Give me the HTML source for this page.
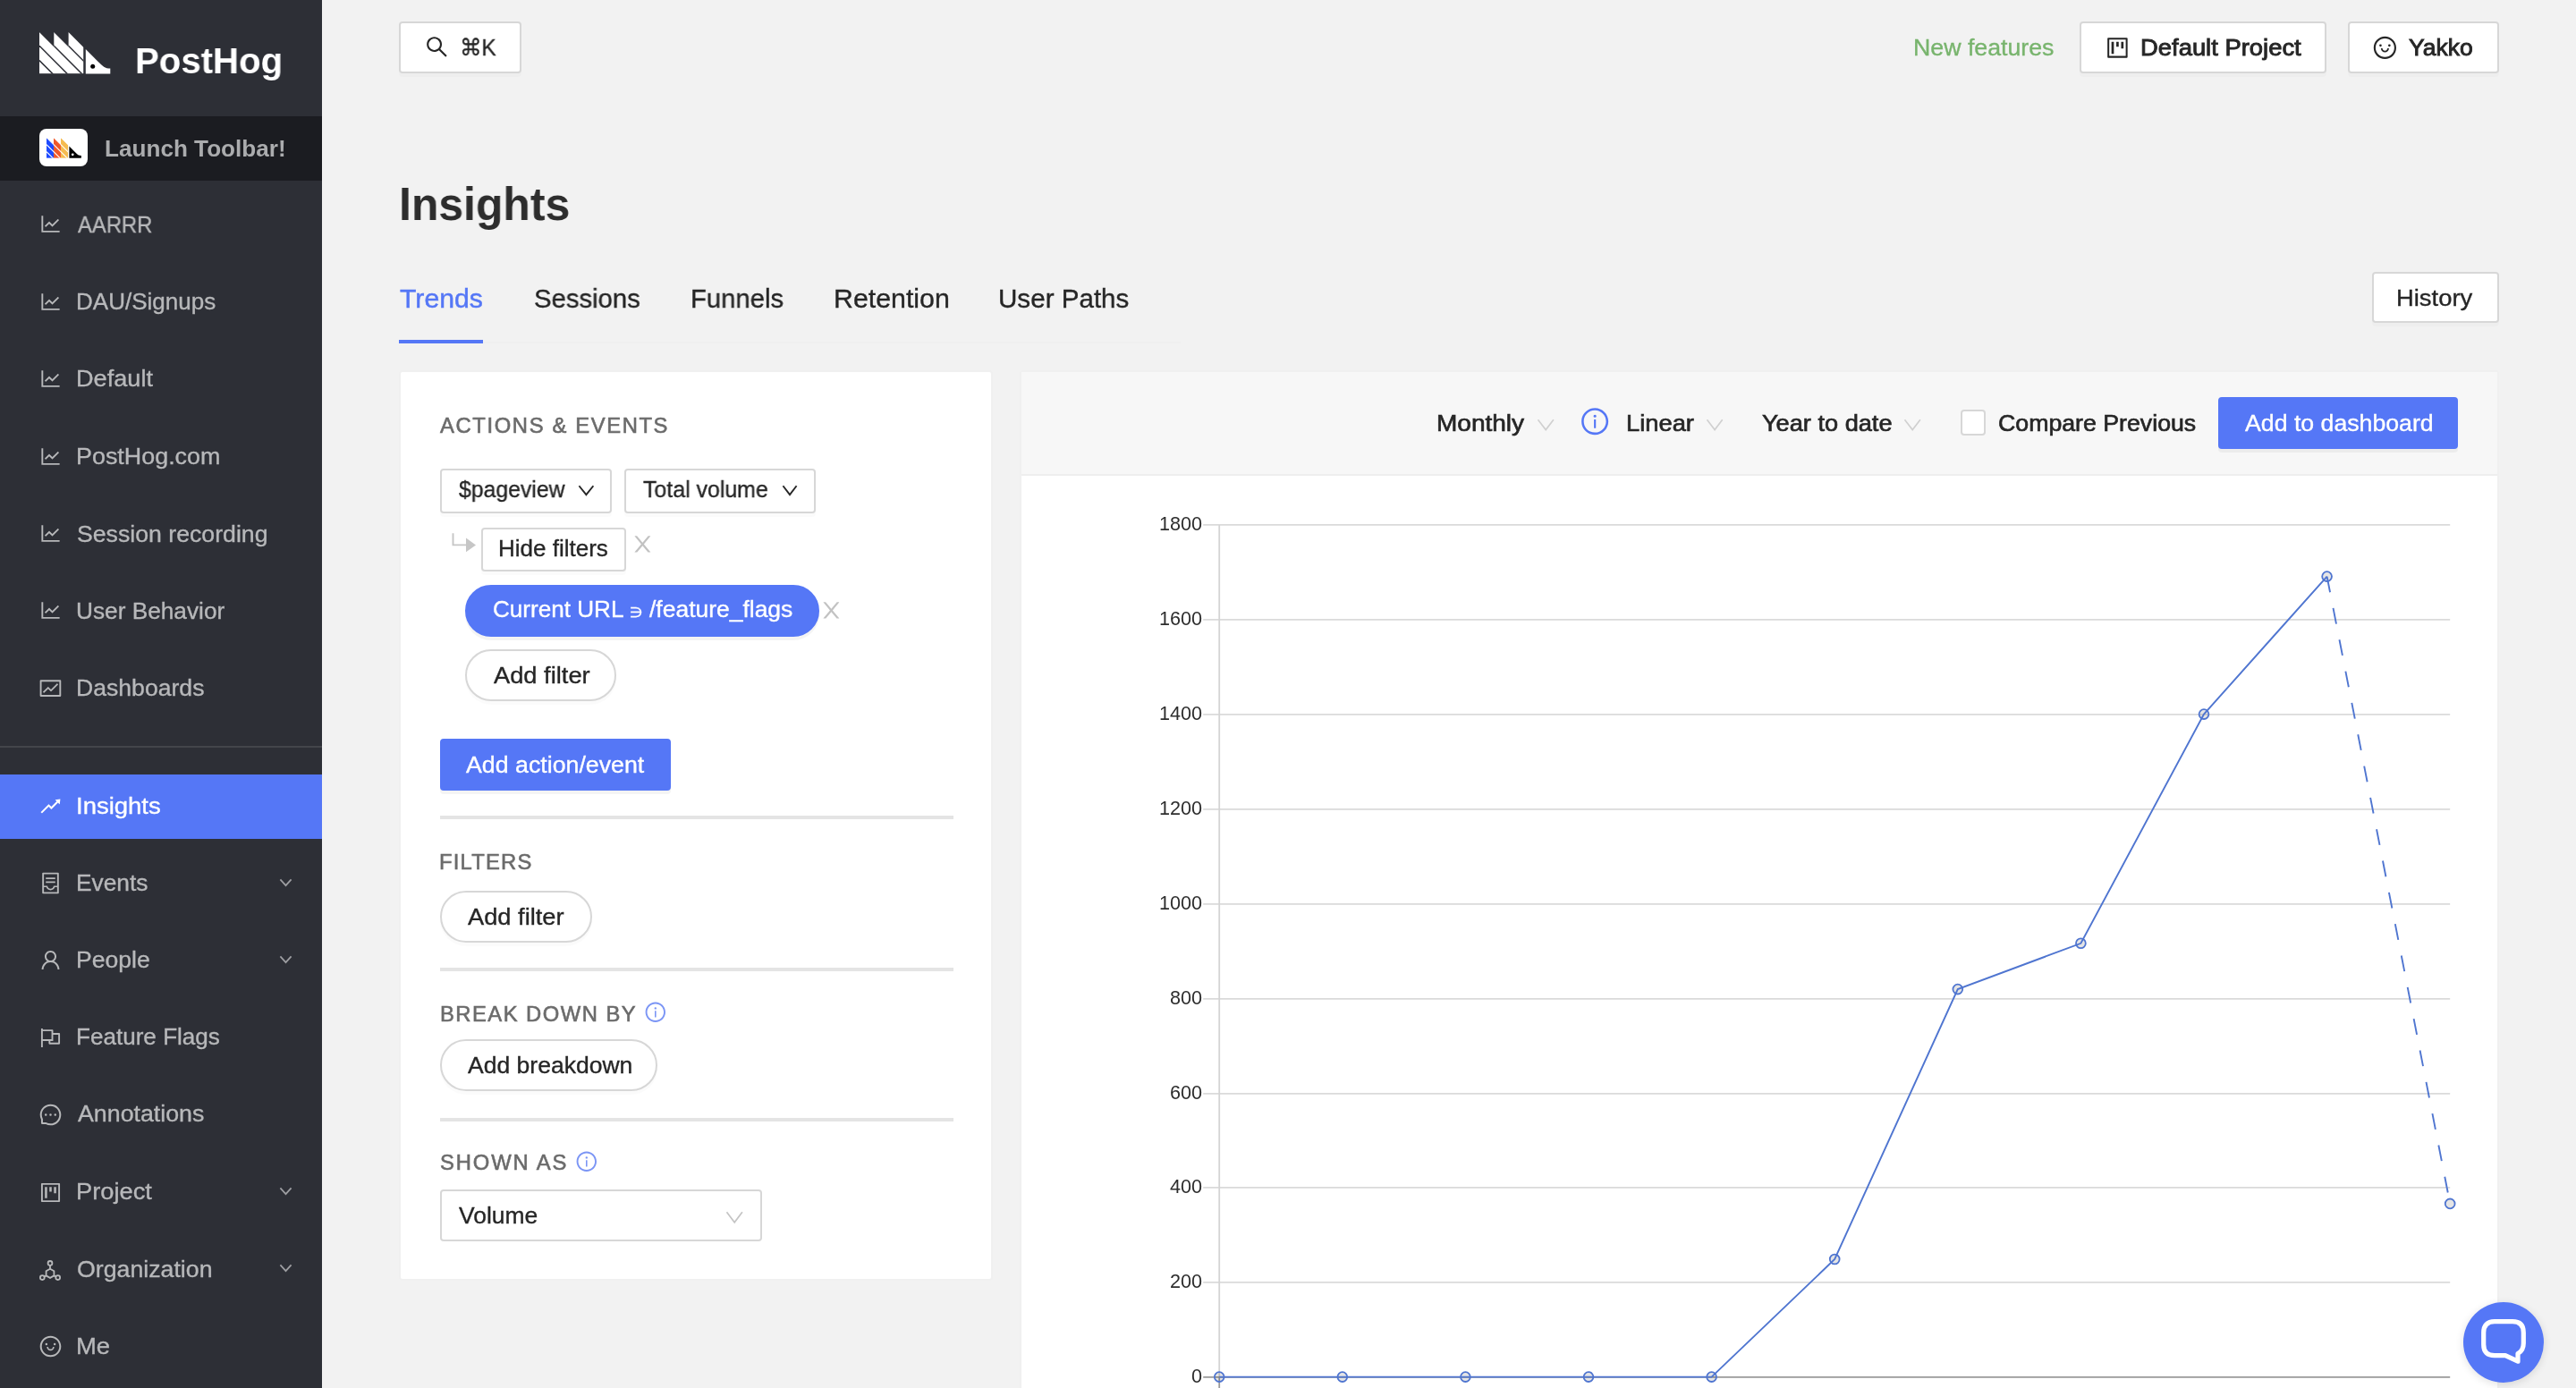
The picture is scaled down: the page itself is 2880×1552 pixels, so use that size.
<!DOCTYPE html>
<html lang="en"><head><meta charset="utf-8"><title>Insights • PostHog</title>
<style>
*{box-sizing:border-box;margin:0;padding:0}
html,body{width:2880px;height:1552px;overflow:hidden;background:#f2f2f2;font-family:"Liberation Sans", "DejaVu Sans", sans-serif;}
body{position:relative}
@media (max-width:2000px){html{zoom:0.5}}
.t{position:absolute;white-space:nowrap;line-height:1;transform-origin:0 50%;display:block;text-decoration:none;will-change:transform;-webkit-text-stroke:0.35px currentColor}
h1.t{font-weight:700}
.t.b{-webkit-text-stroke:0}
.semi{-webkit-text-stroke:0.9px currentColor}
.med{-webkit-text-stroke:0.65px currentColor}
.lbl{-webkit-text-stroke:0.6px currentColor}
.ic{position:absolute;display:block;overflow:visible}
aside{position:absolute;left:0;top:0;width:360px;height:1552px;background:#2d2f36}
.launch{position:absolute;left:0;top:130px;width:360px;height:72px;background:#1b1c21}
.lt-box{position:absolute;left:44px;top:144px;width:54px;height:42px;border-radius:8px;background:#fff}
.sb-div{position:absolute;left:0;top:834px;width:360px;height:1.8px;background:#43454b}
.mi-active{position:absolute;left:0;top:866px;width:360px;height:72px;background:#5577f6}
.btn,.pill{position:absolute;background:#fff;border:2px solid #d7d7d7;border-radius:4px;box-shadow:0 4px 0 rgba(0,0,0,0.016)}
.pill{border-radius:40px}
.primary{background:#5577f6;border-color:#5577f6;box-shadow:0 4px 0 rgba(0,0,0,0.045)}
.sel{box-shadow:none}
.tabline{position:absolute;left:446px;top:382px;width:874px;height:2px;background:#efefef}
.inkbar{position:absolute;left:446px;top:380px;width:94px;height:4px;background:#5577f6}
.cardbg{position:absolute;background:#fff;border:2px solid #f0f0f0}
.cardbg.left{left:446px;top:414px;width:664px;height:1018px;border-radius:4px}
.cardbg.right{left:1140px;top:414px;width:1654px;height:1200px;border-radius:4px 4px 0 0}
.card-head{position:absolute;left:0;top:0;width:100%;height:116px;background:#f7f7f7;border-bottom:2px solid #eeeeee}
hr{position:absolute;left:492px;width:574px;height:4px;border:0;background:#e4e4e4}
.cb{position:absolute;width:28px;height:29px;border:2px solid #d7d7d7;border-radius:4px;background:#fff}
.chart{position:absolute;overflow:hidden;will-change:transform}
.tick{font-family:"Liberation Sans", "DejaVu Sans", sans-serif;font-size:21.6px;fill:#2d2d2d}
.chat{position:absolute;left:2754px;top:1456.4px;width:90px;height:90px;border-radius:50%;background:#5577f6;box-shadow:0 2px 10px rgba(0,0,0,0.12)}
</style></head>
<body>
<aside><nav>
<svg class="ic" style="left:43.8px;top:35.8px;width:80px;height:46.4px" viewBox="0 0 80 46.4">
<defs><clipPath id="hog"><polygon points="0,0 46.4,46.4 0,46.4"/><polygon points="16.3,0 49.5,33.2 49.5,46.4 16.3,46.4"/><polygon points="32.6,0 49.5,16.9 49.5,46.4 32.6,46.4"/></clipPath></defs>
<g clip-path="url(#hog)"><rect x="0" y="0" width="49.5" height="46.4" fill="#fff"/>
<g stroke="#2d2f36" stroke-width="1.5" fill="none">
<line x1="0" y1="-1" x2="60" y2="59"/><line x1="16.3" y1="-1" x2="76.3" y2="59"/><line x1="0" y1="15.3" x2="60" y2="75.3"/><line x1="0" y1="31.6" x2="60" y2="91.6"/></g></g>
<path d="M51.8,19 L66,33.2 C70.5,37.7 73.5,40.6 79.3,40.6 L79.3,46.4 L51.8,46.4 Z" fill="#fff"/>
<circle cx="59.7" cy="38.2" r="2.5" fill="#000"/>
</svg>
<span class="t brand b" style="font-size:41px;color:#fff;font-weight:700;left:151.48px;top:48.00px;transform:scaleX(0.9794);">PostHog</span>
<div class="launch"></div>
<div class="lt-box"></div>
<svg class="ic" style="left:51.9px;top:153.8px;width:39.2px;height:23px" viewBox="0 0 80 46.4">
<defs><clipPath id="hog2"><polygon points="0,0 46.4,46.4 0,46.4"/><polygon points="16.3,0 49.5,33.2 49.5,46.4 16.3,46.4"/><polygon points="32.6,0 49.5,16.9 49.5,46.4 32.6,46.4"/></clipPath></defs>
<g clip-path="url(#hog2)"><rect x="0" y="0" width="16.3" height="46.4" fill="#1d4aff"/><rect x="16.3" y="0" width="16.3" height="46.4" fill="#f0582a"/><rect x="32.6" y="0" width="16.9" height="46.4" fill="#f5bc51"/>
<g stroke="#fff" stroke-width="2.2" fill="none">
<line x1="0" y1="-1" x2="60" y2="59"/><line x1="16.3" y1="-1" x2="76.3" y2="59"/><line x1="0" y1="15.3" x2="60" y2="75.3"/><line x1="0" y1="31.6" x2="60" y2="91.6"/></g></g>
<path d="M51.8,19 L66,33.2 C70.5,37.7 73.5,40.6 79.3,40.6 L79.3,46.4 L51.8,46.4 Z" fill="#000"/>
<circle cx="59.7" cy="38.2" r="2.8" fill="#fff"/>
</svg>
<span class="t  b" style="font-size:25.6px;color:#abacae;font-weight:700;left:116.81px;top:154.00px;transform:scaleX(1.0205);">Launch Toolbar!</span>
<a class="mi"><svg class="ic" style="left:42.6px;top:237.3px;width:27.0px;height:27.0px;fill:#b7b8ba;" viewBox="0 0 1024 1024"><path d="M888 792H200V168c0-4.400-3.600-8-8-8h-56c-4.400 0-8 3.600-8 8v688c0 4.400 3.600 8 8 8h752c4.400 0 8-3.600 8-8v-56c0-4.400-3.600-8-8-8zM305.800 637.700c3.100 3.100 8.100 3.100 11.300 0l138.300-137.600L583 628.500c3.100 3.100 8.200 3.100 11.300 0l275.400-275.300c3.100-3.100 3.100-8.200 0-11.300l-39.600-39.600a8.030 8.030 0 0 0-11.300 0l-230 229.900L461.400 404a8.030 8.030 0 0 0-11.300 0L266.300 586.700a8.030 8.030 0 0 0 0 11.300l39.500 39.700z"/></svg><span class="t" style="font-size:25.6px;color:#b7b8ba;left:87.12px;top:239.00px;transform:scaleX(0.9316);">AARRR</span></a>
<a class="mi"><svg class="ic" style="left:42.6px;top:323.7px;width:27.0px;height:27.0px;fill:#b7b8ba;" viewBox="0 0 1024 1024"><path d="M888 792H200V168c0-4.400-3.600-8-8-8h-56c-4.400 0-8 3.600-8 8v688c0 4.400 3.600 8 8 8h752c4.400 0 8-3.600 8-8v-56c0-4.400-3.600-8-8-8zM305.800 637.700c3.100 3.100 8.100 3.100 11.300 0l138.300-137.600L583 628.500c3.100 3.100 8.200 3.100 11.300 0l275.400-275.300c3.100-3.100 3.100-8.200 0-11.300l-39.600-39.600a8.030 8.030 0 0 0-11.300 0l-230 229.900L461.400 404a8.030 8.030 0 0 0-11.300 0L266.300 586.700a8.030 8.030 0 0 0 0 11.300l39.500 39.700z"/></svg><span class="t" style="font-size:25.6px;color:#b7b8ba;left:85.42px;top:325.00px;transform:scaleX(1.0163);">DAU/Signups</span></a>
<a class="mi"><svg class="ic" style="left:42.6px;top:410.1px;width:27.0px;height:27.0px;fill:#b7b8ba;" viewBox="0 0 1024 1024"><path d="M888 792H200V168c0-4.400-3.600-8-8-8h-56c-4.400 0-8 3.600-8 8v688c0 4.400 3.600 8 8 8h752c4.400 0 8-3.600 8-8v-56c0-4.400-3.600-8-8-8zM305.800 637.700c3.100 3.100 8.100 3.100 11.300 0l138.300-137.600L583 628.500c3.100 3.100 8.200 3.100 11.300 0l275.400-275.300c3.100-3.100 3.100-8.200 0-11.300l-39.600-39.600a8.030 8.030 0 0 0-11.300 0l-230 229.900L461.400 404a8.030 8.030 0 0 0-11.300 0L266.300 586.700a8.030 8.030 0 0 0 0 11.300l39.500 39.700z"/></svg><span class="t" style="font-size:25.6px;color:#b7b8ba;left:85.08px;top:411.00px;transform:scaleX(1.0603);">Default</span></a>
<a class="mi"><svg class="ic" style="left:42.6px;top:496.5px;width:27.0px;height:27.0px;fill:#b7b8ba;" viewBox="0 0 1024 1024"><path d="M888 792H200V168c0-4.400-3.600-8-8-8h-56c-4.400 0-8 3.600-8 8v688c0 4.400 3.600 8 8 8h752c4.400 0 8-3.600 8-8v-56c0-4.400-3.600-8-8-8zM305.800 637.700c3.100 3.100 8.100 3.100 11.300 0l138.300-137.600L583 628.500c3.100 3.100 8.200 3.100 11.300 0l275.400-275.300c3.100-3.100 3.100-8.200 0-11.300l-39.600-39.600a8.030 8.030 0 0 0-11.300 0l-230 229.900L461.400 404a8.030 8.030 0 0 0-11.300 0L266.300 586.700a8.030 8.030 0 0 0 0 11.300l39.500 39.700z"/></svg><span class="t" style="font-size:25.6px;color:#b7b8ba;left:85.17px;top:498.00px;transform:scaleX(1.0507);">PostHog.com</span></a>
<a class="mi"><svg class="ic" style="left:42.6px;top:582.9px;width:27.0px;height:27.0px;fill:#b7b8ba;" viewBox="0 0 1024 1024"><path d="M888 792H200V168c0-4.400-3.600-8-8-8h-56c-4.400 0-8 3.600-8 8v688c0 4.400 3.600 8 8 8h752c4.400 0 8-3.600 8-8v-56c0-4.400-3.600-8-8-8zM305.800 637.700c3.100 3.100 8.100 3.100 11.300 0l138.300-137.600L583 628.500c3.100 3.100 8.200 3.100 11.300 0l275.400-275.300c3.100-3.100 3.100-8.200 0-11.300l-39.600-39.600a8.030 8.030 0 0 0-11.300 0l-230 229.900L461.400 404a8.030 8.030 0 0 0-11.300 0L266.300 586.700a8.030 8.030 0 0 0 0 11.300l39.500 39.700z"/></svg><span class="t" style="font-size:25.6px;color:#b7b8ba;left:86.05px;top:585.00px;transform:scaleX(1.0421);">Session recording</span></a>
<a class="mi"><svg class="ic" style="left:42.6px;top:669.3px;width:27.0px;height:27.0px;fill:#b7b8ba;" viewBox="0 0 1024 1024"><path d="M888 792H200V168c0-4.400-3.600-8-8-8h-56c-4.400 0-8 3.600-8 8v688c0 4.400 3.600 8 8 8h752c4.400 0 8-3.600 8-8v-56c0-4.400-3.600-8-8-8zM305.800 637.700c3.100 3.100 8.100 3.100 11.300 0l138.300-137.600L583 628.500c3.100 3.100 8.200 3.100 11.300 0l275.400-275.300c3.100-3.100 3.100-8.200 0-11.300l-39.600-39.600a8.030 8.030 0 0 0-11.300 0l-230 229.900L461.400 404a8.030 8.030 0 0 0-11.300 0L266.300 586.700a8.030 8.030 0 0 0 0 11.300l39.500 39.700z"/></svg><span class="t" style="font-size:25.6px;color:#b7b8ba;left:84.73px;top:671.00px;transform:scaleX(1.0251);">User Behavior</span></a>
<a class="mi"><svg class="ic" style="left:42.6px;top:755.7px;width:27.0px;height:27.0px;fill:#b7b8ba;" viewBox="0 0 1024 1024"><path d="M926 164H94c-17.700 0-32 14.300-32 32v640c0 17.700 14.300 32 32 32h832c17.700 0 32-14.300 32-32V196c0-17.700-14.300-32-32-32zm-40 632H134V236h752v560zm-658.900-82.300c3.100 3.100 8.200 3.100 11.300 0l172.500-172.500 114.400 114.500c3.100 3.100 8.200 3.100 11.300 0l297-297.200c3.100-3.100 3.100-8.200 0-11.300l-36.800-36.800a8.030 8.030 0 0 0-11.300 0L531 565 416.600 450.500a8.030 8.030 0 0 0-11.300 0l-214.900 215a8.030 8.030 0 0 0 0 11.300l36.700 36.900z"/></svg><span class="t" style="font-size:25.6px;color:#b7b8ba;left:85.25px;top:757.00px;transform:scaleX(1.0393);">Dashboards</span></a>
<div class="sb-div"></div>
<div class="mi-active"></div>
<a class="mi"><svg class="ic" style="left:42.6px;top:887.5px;width:27.0px;height:27.0px;fill:#fff;" viewBox="0 0 1024 1024"><path d="M917 211.100l-199.200 24c-6.600.800-9.400 8.900-4.700 13.600l59.300 59.300-226 226-101.800-101.700c-6.300-6.300-16.400-6.200-22.600 0L100.300 754.100a8.030 8.030 0 0 0 0 11.300l45 45.200c3.100 3.100 8.200 3.100 11.300 0L433.300 534 535 635.700c6.300 6.200 16.400 6.200 22.600 0L829 364.500l59.300 59.300a8.010 8.010 0 0 0 13.600-4.700l24-199.200c.7-5.100-3.700-9.500-8.900-8.800z"/></svg><span class="t" style="font-size:25.6px;color:#fff;left:84.67px;top:889.00px;transform:scaleX(1.0734);">Insights</span></a>
<a class="mi"><svg class="ic" style="left:42.6px;top:973.9px;width:27.0px;height:27.0px;fill:#b7b8ba;" viewBox="0 0 1024 1024"><path d="M832 64H192c-17.700 0-32 14.300-32 32v832c0 17.700 14.300 32 32 32h640c17.700 0 32-14.300 32-32V96c0-17.700-14.300-32-32-32zm-40 824H232V687h97.900c11.600 32.800 32 62.300 59.100 84.700 34.500 28.500 78.200 44.300 123 44.300s88.500-15.700 123-44.300c27.100-22.400 47.500-51.900 59.100-84.700H792v-63H643.600l-5.200 24.700C626.400 708.500 573.200 752 512 752s-114.400-43.500-126.500-103.300l-5.200-24.700H232V136h560v752zM320 341h384c4.400 0 8-3.600 8-8v-48c0-4.400-3.600-8-8-8H320c-4.400 0-8 3.600-8 8v48c0 4.400 3.600 8 8 8zm0 160h384c4.400 0 8-3.600 8-8v-48c0-4.400-3.600-8-8-8H320c-4.400 0-8 3.600-8 8v48c0 4.400 3.600 8 8 8z"/></svg><span class="t" style="font-size:25.6px;color:#b7b8ba;left:85.34px;top:975.00px;transform:scaleX(1.0280);">Events</span><svg class="ic" style="left:311.6px;top:981.7px;width:15.0px;height:10.2px" viewBox="-2 -2 15.0 10.2"><polyline points="0,0 5.50,6.20 11.00,0" fill="none" stroke="#9d9ea2" stroke-width="1.8" stroke-linecap="square" stroke-linejoin="miter"/></svg></a>
<a class="mi"><svg class="ic" style="left:42.6px;top:1060.3px;width:27.0px;height:27.0px;fill:#b7b8ba;" viewBox="0 0 1024 1024"><path d="M858.500 763.600a374 374 0 0 0-80.600-119.500 375.630 375.630 0 0 0-119.500-80.600c-.4-.2-.8-.3-1.200-.5C719.500 518 760 444.700 760 362c0-137-111-248-248-248S264 225 264 362c0 82.700 40.500 156 102.800 201.100-.4.2-.8.3-1.200.5-44.800 18.900-85 46-119.500 80.600a375.630 375.630 0 0 0-80.600 119.500A371.700 371.700 0 0 0 136 901.800a8 8 0 0 0 8 8.200h60c4.400 0 7.900-3.500 8-7.800 2-77.200 33-149.500 87.800-204.300 56.700-56.700 132-87.900 212.200-87.900s155.500 31.200 212.200 87.900C779 752.700 810 825 812 902.200c.1 4.400 3.600 7.800 8 7.800h60a8 8 0 0 0 8-8.200c-1-47.800-10.900-94.300-29.500-138.200zM512 534c-45.900 0-89.100-17.900-121.600-50.400S340 407.900 340 362c0-45.900 17.900-89.100 50.400-121.600S466.100 190 512 190s89.100 17.900 121.600 50.400S684 316.100 684 362c0 45.900-17.900 89.100-50.400 121.600S557.900 534 512 534z"/></svg><span class="t" style="font-size:25.6px;color:#b7b8ba;left:85.28px;top:1061.00px;transform:scaleX(1.0383);">People</span><svg class="ic" style="left:311.6px;top:1067.7px;width:15.0px;height:10.2px" viewBox="-2 -2 15.0 10.2"><polyline points="0,0 5.50,6.20 11.00,0" fill="none" stroke="#9d9ea2" stroke-width="1.8" stroke-linecap="square" stroke-linejoin="miter"/></svg></a>
<a class="mi"><svg class="ic" style="left:42.6px;top:1146.7px;width:27.0px;height:27.0px;fill:#b7b8ba;" viewBox="0 0 1024 1024"><path d="M880 305H624V192c0-17.700-14.300-32-32-32H184v-40c0-4.400-3.600-8-8-8h-56c-4.400 0-8 3.600-8 8v784c0 4.400 3.600 8 8 8h56c4.400 0 8-3.600 8-8V640h248v113c0 17.700 14.300 32 32 32h416c17.700 0 32-14.300 32-32V337c0-17.700-14.300-32-32-32zM184 568V232h368v336H184zm656 145H504v-73h112c4.400 0 8-3.600 8-8V377h216v336z"/></svg><span class="t" style="font-size:25.6px;color:#b7b8ba;left:85.40px;top:1147.00px;transform:scaleX(1.0190);">Feature Flags</span></a>
<a class="mi"><svg class="ic" style="left:42.6px;top:1233.1px;width:27.0px;height:27.0px;fill:#b7b8ba;" viewBox="0 0 1024 1024"><path d="M464 512a48 48 0 1 0 96 0 48 48 0 1 0-96 0zm200 0a48 48 0 1 0 96 0 48 48 0 1 0-96 0zm-400 0a48 48 0 1 0 96 0 48 48 0 1 0-96 0zm661.200-173.600c-22.600-53.700-55-101.900-96.300-143.300a444.350 444.350 0 0 0-143.300-96.300C630.600 75.700 572.200 64 512 64h-2c-60.600.3-119.300 12.300-174.500 35.900a445.350 445.350 0 0 0-142 96.500c-40.900 41.300-73 89.300-95.200 142.800-23 55.400-34.600 114.300-34.300 174.900A449.400 449.400 0 0 0 112 714v152a46 46 0 0 0 46 46h152.100A449.400 449.400 0 0 0 510 960h2.100c59.900 0 118-11.600 172.700-34.300a444.480 444.480 0 0 0 142.800-95.200c41.300-40.900 73.800-88.700 96.500-142 23.600-55.200 35.600-113.900 35.900-174.500.3-60.900-11.500-120-34.800-175.600zm-151.100 438C704 845.800 611 884 512 884h-1.700c-60.300-.3-120.200-15.300-173.100-43.500l-8.400-4.500H188V695.200l-4.500-8.400C155.300 633.900 140.300 574 140 513.700c-.4-99.700 37.700-193.300 107.600-263.800 69.800-70.500 163.100-109.500 262.800-109.900h1.700c50 0 98.500 9.700 144.200 28.900 44.600 18.700 84.600 45.600 119 80 34.300 34.300 61.300 74.400 80 119 19.400 46.200 29.100 95.200 28.900 145.800-.6 99.600-39.700 192.900-110.100 262.700z"/></svg><span class="t" style="font-size:25.6px;color:#b7b8ba;left:87.12px;top:1233.00px;transform:scaleX(1.0460);">Annotations</span></a>
<a class="mi"><svg class="ic" style="left:42.6px;top:1319.5px;width:27.0px;height:27.0px;fill:#b7b8ba;" viewBox="0 0 1024 1024"><path d="M280 752h80c4.400 0 8-3.600 8-8V280c0-4.400-3.600-8-8-8h-80c-4.400 0-8 3.600-8 8v464c0 4.400 3.600 8 8 8zm192-280h80c4.400 0 8-3.600 8-8V280c0-4.400-3.600-8-8-8h-80c-4.400 0-8 3.600-8 8v184c0 4.400 3.600 8 8 8zm192 72h80c4.400 0 8-3.600 8-8V280c0-4.400-3.600-8-8-8h-80c-4.400 0-8 3.600-8 8v256c0 4.400 3.600 8 8 8zm216-432H144c-17.700 0-32 14.300-32 32v736c0 17.700 14.300 32 32 32h736c17.700 0 32-14.300 32-32V144c0-17.700-14.300-32-32-32zm-40 728H184V184h656v656z"/></svg><span class="t" style="font-size:25.6px;color:#b7b8ba;left:85.03px;top:1320.00px;transform:scaleX(1.0663);">Project</span><svg class="ic" style="left:311.6px;top:1326.6px;width:15.0px;height:10.2px" viewBox="-2 -2 15.0 10.2"><polyline points="0,0 5.50,6.20 11.00,0" fill="none" stroke="#9d9ea2" stroke-width="1.8" stroke-linecap="square" stroke-linejoin="miter"/></svg></a>
<a class="mi"><svg class="ic" style="left:42.0px;top:1405.9px;width:28px;height:28px" viewBox="-14 -14 28 28" fill="none" stroke="#b7b8ba" stroke-width="1.8"><circle cx="0" cy="-7.6" r="2.4"/><circle cx="-8.7" cy="8.6" r="2.4"/><circle cx="8.7" cy="8.6" r="2.4"/><polygon points="0,-1.3 4.4,1.2 4.4,6.4 0,8.9 -4.4,6.4 -4.4,1.2"/><path d="M0,-5.2 V-1.3 M-4.4,6.4 L-6.6,7.6 M4.4,6.4 L6.600,7.600"/></svg><span class="t" style="font-size:25.6px;color:#b7b8ba;left:85.87px;top:1407.00px;transform:scaleX(1.0441);">Organization</span><svg class="ic" style="left:311.6px;top:1413.0px;width:15.0px;height:10.2px" viewBox="-2 -2 15.0 10.2"><polyline points="0,0 5.50,6.20 11.00,0" fill="none" stroke="#9d9ea2" stroke-width="1.8" stroke-linecap="square" stroke-linejoin="miter"/></svg></a>
<a class="mi"><svg class="ic" style="left:42.6px;top:1492.3px;width:27.0px;height:27.0px;fill:#b7b8ba;" viewBox="0 0 1024 1024"><path d="M288 421a48 48 0 1 0 96 0 48 48 0 1 0-96 0zm352 0a48 48 0 1 0 96 0 48 48 0 1 0-96 0zM512 64C264.600 64 64 264.600 64 512s200.600 448 448 448 448-200.600 448-448S759.400 64 512 64zm263 711c-34.200 34.200-74 61-118.300 79.800C611 874.200 562.300 884 512 884c-50.300 0-99-9.800-144.800-29.200A370.400 370.400 0 0 1 248.900 775c-34.200-34.200-61-74-79.800-118.300C149.800 611 140 562.300 140 512s9.800-99 29.200-144.800A370.400 370.400 0 0 1 249 248.900c34.200-34.200 74-61 118.300-79.800C413 149.800 461.700 140 512 140c50.300 0 99 9.800 144.800 29.200A370.400 370.400 0 0 1 775.100 249c34.200 34.200 61 74 79.800 118.300C874.200 413 884 461.700 884 512s-9.800 99-29.200 144.800A368.890 368.890 0 0 1 775 775zM664 533h-48.100c-4.200 0-7.800 3.200-8.100 7.400C604 589.900 562.500 629 512 629s-92.100-39.100-95.800-88.600c-.3-4.200-3.900-7.400-8.100-7.400H360a8 8 0 0 0-8 8.400c4.400 84.300 74.500 151.600 160 151.600s155.600-67.300 160-151.600a8 8 0 0 0-8-8.400z"/></svg><span class="t" style="font-size:25.6px;color:#b7b8ba;left:85.06px;top:1493.00px;transform:scaleX(1.0725);">Me</span></a>
</nav></aside>
<main>
<header class="topbar">
<div class="btn" style="left:446px;top:24px;width:137px;height:58px"></div>
<svg class="ic" style="left:473.5px;top:38.2px;width:28.8px;height:28.8px;fill:#262626;" viewBox="0 0 1024 1024"><path d="M909.600 854.500L649.900 594.800C690.200 542.700 712 479 712 412c0-80.200-31.300-155.400-87.900-212.100-56.600-56.700-132-87.900-212.100-87.900s-155.500 31.300-212.100 87.900C143.200 256.500 112 331.800 112 412c0 80.100 31.300 155.500 87.900 212.100C256.500 680.800 331.800 712 412 712c67 0 130.600-21.800 182.700-62l259.700 259.600a8.200 8.200 0 0 0 11.600 0l43.600-43.500a8.200 8.200 0 0 0 0-11.600zM570.400 570.400C528 612.700 471.800 636 412 636s-116-23.300-158.400-65.600C211.300 528 188 471.800 188 412s23.300-116.100 65.600-158.400C296 211.300 352.200 188 412 188s116.100 23.200 158.400 65.600S636 352.200 636 412s-23.300 116.100-65.600 158.400z"/></svg>
<span class="t" style="font-size:25.6px;color:#262626;left:513.74px;top:41.00px;transform:scaleX(0.9556);">⌘K</span>
<span class="t" style="font-size:25.6px;color:#78b46d;left:2138.92px;top:41.00px;transform:scaleX(1.0440);">New features</span>
<div class="btn" style="left:2325px;top:24px;width:276px;height:58px"></div>
<svg class="ic" style="left:2352.7px;top:38.5px;width:28.8px;height:28.8px;fill:#262626;" viewBox="0 0 1024 1024"><path d="M280 752h80c4.400 0 8-3.600 8-8V280c0-4.400-3.600-8-8-8h-80c-4.400 0-8 3.600-8 8v464c0 4.400 3.600 8 8 8zm192-280h80c4.400 0 8-3.600 8-8V280c0-4.400-3.600-8-8-8h-80c-4.400 0-8 3.600-8 8v184c0 4.400 3.600 8 8 8zm192 72h80c4.400 0 8-3.600 8-8V280c0-4.400-3.600-8-8-8h-80c-4.400 0-8 3.600-8 8v256c0 4.400 3.600 8 8 8zm216-432H144c-17.700 0-32 14.300-32 32v736c0 17.700 14.300 32 32 32h736c17.700 0 32-14.300 32-32V144c0-17.700-14.300-32-32-32zm-40 728H184V184h656v656z"/></svg>
<span class="t semi" style="font-size:25.6px;color:#262626;left:2393.22px;top:41.00px;transform:scaleX(1.0706);">Default Project</span>
<div class="btn" style="left:2625px;top:24px;width:169px;height:58px"></div>
<svg class="ic" style="left:2651.6px;top:38.5px;width:28.8px;height:28.8px;fill:#262626;" viewBox="0 0 1024 1024"><path d="M288 421a48 48 0 1 0 96 0 48 48 0 1 0-96 0zm352 0a48 48 0 1 0 96 0 48 48 0 1 0-96 0zM512 64C264.600 64 64 264.600 64 512s200.600 448 448 448 448-200.600 448-448S759.400 64 512 64zm263 711c-34.200 34.200-74 61-118.300 79.800C611 874.200 562.300 884 512 884c-50.300 0-99-9.800-144.800-29.200A370.400 370.400 0 0 1 248.900 775c-34.200-34.200-61-74-79.800-118.300C149.800 611 140 562.300 140 512s9.800-99 29.200-144.800A370.400 370.400 0 0 1 249 248.900c34.200-34.200 74-61 118.300-79.800C413 149.800 461.700 140 512 140c50.300 0 99 9.800 144.800 29.200A370.400 370.400 0 0 1 775.100 249c34.200 34.200 61 74 79.800 118.300C874.200 413 884 461.700 884 512s-9.800 99-29.200 144.800A368.890 368.890 0 0 1 775 775zM664 533h-48.100c-4.200 0-7.800 3.200-8.100 7.400C604 589.900 562.500 629 512 629s-92.100-39.100-95.800-88.600c-.3-4.200-3.900-7.400-8.100-7.400H360a8 8 0 0 0-8 8.400c4.400 84.300 74.500 151.600 160 151.600s155.600-67.300 160-151.600a8 8 0 0 0-8-8.400z"/></svg>
<span class="t semi" style="font-size:25.6px;color:#262626;left:2692.75px;top:41.00px;transform:scaleX(1.0348);">Yakko</span>
</header>
<h1 class="t  b" style="font-size:51.8px;color:#2d2d2d;font-weight:700;left:445.88px;top:203.00px;transform:scaleX(0.9633);">Insights</h1>
<nav class="tabs">
<div class="tabline"></div><div class="inkbar"></div>
<span class="t" style="font-size:29.6px;color:#5577f6;-webkit-text-stroke:0.45px #5577f6;left:446.60px;top:319.00px;transform:scaleX(1.0213);">Trends</span>
<span class="t" style="font-size:29.6px;color:#262626;left:596.52px;top:319.00px;transform:scaleX(0.9897);">Sessions</span>
<span class="t" style="font-size:29.6px;color:#262626;left:771.82px;top:319.00px;transform:scaleX(0.9884);">Funnels</span>
<span class="t" style="font-size:29.6px;color:#262626;left:931.61px;top:319.00px;transform:scaleX(1.0244);">Retention</span>
<span class="t" style="font-size:29.6px;color:#262626;left:1115.96px;top:319.00px;transform:scaleX(0.9994);">User Paths</span>
</nav>
<div class="btn" style="left:2652px;top:304px;width:142px;height:57px"></div>
<span class="t" style="font-size:25.6px;color:#262626;left:2678.77px;top:321.00px;transform:scaleX(1.0700);">History</span>
<section class="card-left"><div class="cardbg left"></div>
<span class="t lbl" style="font-size:23.8px;color:#6b6b6b;letter-spacing:1.627px;left:491.98px;top:464.00px;">ACTIONS &amp; EVENTS</span>
<div class="btn sm" style="left:492px;top:524px;width:192px;height:50px"></div>
<span class="t" style="font-size:25.6px;color:#262626;left:512.69px;top:535.00px;transform:scaleX(0.9675);">$pageview</span>
<svg class="ic" style="left:645.6px;top:542.2px;width:18.8px;height:13.2px" viewBox="-2 -2 18.8 13.2"><polyline points="0,0 7.40,9.20 14.80,0" fill="none" stroke="#262626" stroke-width="1.9" stroke-linecap="square" stroke-linejoin="miter"/></svg>
<div class="btn sm" style="left:698px;top:524px;width:214px;height:50px"></div>
<span class="t" style="font-size:25.6px;color:#262626;left:718.88px;top:535.00px;transform:scaleX(0.9725);">Total volume</span>
<svg class="ic" style="left:874.4px;top:542.2px;width:18.0px;height:13.2px" viewBox="-2 -2 18.0 13.2"><polyline points="0,0 7.00,9.20 14.00,0" fill="none" stroke="#262626" stroke-width="1.9" stroke-linecap="square" stroke-linejoin="miter"/></svg>
<svg class="ic" style="left:503px;top:594px;width:32px;height:26px" viewBox="503 594 32 26"><path d="M506.5,596.3 V609.4 H522" fill="none" stroke="#c6c6c6" stroke-width="1.9"/><path d="M521,601.6 L532,609.4 L521,617.2 Z" fill="#c6c6c6"/></svg>
<div class="btn sm" style="left:538px;top:590px;width:162px;height:49px"></div>
<span class="t" style="font-size:25.6px;color:#262626;left:557.21px;top:601.00px;transform:scaleX(1.0161);">Hide filters</span>
<svg class="ic" style="left:704.2px;top:593.7px;width:28.8px;height:28.8px;fill:#c2c2c2;" viewBox="0 0 1024 1024"><path d="M563.800 512l262.500-312.900c4.400-5.200.7-13.100-6.100-13.100h-79.800c-4.700 0-9.200 2.100-12.300 5.700L511.600 449.800 295.100 191.700c-3-3.600-7.500-5.700-12.300-5.700H203c-6.800 0-10.500 7.900-6.100 13.100L459.400 512 196.900 824.900A7.950 7.950 0 0 0 203 838h79.800c4.700 0 9.200-2.100 12.300-5.700l216.500-258.100 216.500 258.100c3 3.600 7.500 5.700 12.300 5.700h79.800c6.800 0 10.500-7.900 6.100-13.100L563.800 512z"/></svg>
<div class="pill primary" style="left:520px;top:654px;width:396px;height:58px"></div>
<span class="filter-label"><span class="t" style="font-size:25.6px;color:#fff;left:550.84px;top:669.00px;transform:scaleX(1.0193);">Current URL</span><span class="t" style="font-size:15.6px;color:#fff;left:703.99px;top:677.00px;transform:scaleX(1.0823);">∋</span><span class="t" style="font-size:25.6px;color:#fff;left:725.72px;top:669.00px;transform:scaleX(1.0337);">/feature_flags</span></span>
<svg class="ic" style="left:914.6px;top:667.6px;width:28.8px;height:28.8px;fill:#c2c2c2;" viewBox="0 0 1024 1024"><path d="M563.800 512l262.500-312.900c4.400-5.200.7-13.100-6.100-13.100h-79.800c-4.700 0-9.200 2.100-12.300 5.700L511.600 449.800 295.100 191.700c-3-3.600-7.500-5.700-12.300-5.700H203c-6.800 0-10.500 7.900-6.100 13.100L459.400 512 196.900 824.900A7.950 7.950 0 0 0 203 838h79.800c4.700 0 9.200-2.100 12.300-5.700l216.500-258.100 216.500 258.100c3 3.600 7.500 5.700 12.300 5.700h79.800c6.800 0 10.500-7.900 6.100-13.100L563.800 512z"/></svg>
<div class="pill" style="left:520px;top:726px;width:169px;height:58px"></div>
<span class="t" style="font-size:25.6px;color:#262626;left:551.81px;top:743.00px;transform:scaleX(1.0658);">Add filter</span>
<div class="btn primary" style="left:492px;top:826px;width:258px;height:58px"></div>
<span class="t" style="font-size:25.6px;color:#fff;left:521.38px;top:843.00px;transform:scaleX(1.0450);">Add action/event</span>
<hr style="top:912px">
<span class="t lbl" style="font-size:23.8px;color:#6b6b6b;letter-spacing:1.197px;left:491.43px;top:952.00px;">FILTERS</span>
<div class="pill" style="left:492px;top:996px;width:170px;height:58px"></div>
<span class="t" style="font-size:25.6px;color:#262626;left:523.35px;top:1013.00px;transform:scaleX(1.0648);">Add filter</span>
<hr style="top:1082px">
<span class="t lbl" style="font-size:23.8px;color:#6b6b6b;letter-spacing:1.472px;left:491.75px;top:1122.00px;">BREAK DOWN BY</span>
<svg class="ic" style="left:720.1px;top:1119.0px;width:25.6px;height:25.6px;fill:#7b95f5;" viewBox="0 0 1024 1024"><path d="M512 64C264.600 64 64 264.600 64 512s200.600 448 448 448 448-200.600 448-448S759.400 64 512 64zm0 820c-205.400 0-372-166.600-372-372s166.600-372 372-372 372 166.600 372 372-166.600 372-372 372zM464 336a48 48 0 1 0 96 0 48 48 0 1 0-96 0zm72 112h-48c-4.400 0-8 3.600-8 8v272c0 4.400 3.600 8 8 8h48c4.400 0 8-3.600 8-8V456c0-4.400-3.600-8-8-8z"/></svg>
<div class="pill" style="left:492px;top:1162px;width:243px;height:58px"></div>
<span class="t" style="font-size:25.6px;color:#262626;left:522.80px;top:1179.00px;transform:scaleX(1.0362);">Add breakdown</span>
<hr style="top:1250px">
<span class="t lbl" style="font-size:23.8px;color:#6b6b6b;letter-spacing:1.886px;left:492.09px;top:1288.00px;">SHOWN AS</span>
<svg class="ic" style="left:643.2px;top:1286.1px;width:25.6px;height:25.6px;fill:#7b95f5;" viewBox="0 0 1024 1024"><path d="M512 64C264.600 64 64 264.600 64 512s200.600 448 448 448 448-200.600 448-448S759.400 64 512 64zm0 820c-205.400 0-372-166.600-372-372s166.600-372 372-372 372 166.600 372 372-166.600 372-372 372zM464 336a48 48 0 1 0 96 0 48 48 0 1 0-96 0zm72 112h-48c-4.400 0-8 3.600-8 8v272c0 4.400 3.600 8 8 8h48c4.400 0 8-3.600 8-8V456c0-4.400-3.600-8-8-8z"/></svg>
<div class="btn sel" style="left:492px;top:1330px;width:360px;height:58px"></div>
<span class="t" style="font-size:25.6px;color:#262626;left:513.44px;top:1347.00px;transform:scaleX(1.0335);">Volume</span>
<svg class="ic" style="left:811.2px;top:1353.6px;width:20.4px;height:14.8px" viewBox="-2 -2 20.4 14.8"><polyline points="0,0 8.20,10.80 16.40,0" fill="none" stroke="#c4c4c4" stroke-width="1.7" stroke-linecap="square" stroke-linejoin="miter"/></svg>
</section>
<section class="card-right"><div class="cardbg right"><div class="card-head"></div></div>
<span class="t med" style="font-size:25.6px;color:#262626;left:1606.42px;top:461.00px;transform:scaleX(1.0947);">Monthly</span>
<svg class="ic" style="left:1718.4px;top:467.8px;width:20.4px;height:14.6px" viewBox="-2 -2 20.4 14.6"><polyline points="0,0 8.20,10.60 16.40,0" fill="none" stroke="#d0d0d0" stroke-width="1.7" stroke-linecap="square" stroke-linejoin="miter"/></svg>
<svg class="ic" style="left:1765.5px;top:453.6px;width:34.3px;height:34.3px;fill:#5577f6;" viewBox="0 0 1024 1024"><path d="M512 64C264.600 64 64 264.600 64 512s200.600 448 448 448 448-200.600 448-448S759.400 64 512 64zm0 820c-205.400 0-372-166.600-372-372s166.600-372 372-372 372 166.600 372 372-166.600 372-372 372zM464 336a48 48 0 1 0 96 0 48 48 0 1 0-96 0zm72 112h-48c-4.400 0-8 3.600-8 8v272c0 4.400 3.600 8 8 8h48c4.400 0 8-3.600 8-8V456c0-4.400-3.600-8-8-8z"/></svg>
<span class="t med" style="font-size:25.6px;color:#262626;left:1818.21px;top:461.00px;transform:scaleX(1.0671);">Linear</span>
<svg class="ic" style="left:1907.4px;top:467.8px;width:20.2px;height:14.6px" viewBox="-2 -2 20.2 14.6"><polyline points="0,0 8.10,10.60 16.20,0" fill="none" stroke="#d0d0d0" stroke-width="1.7" stroke-linecap="square" stroke-linejoin="miter"/></svg>
<span class="t med" style="font-size:25.6px;color:#262626;left:1969.69px;top:461.00px;transform:scaleX(1.0613);">Year to date</span>
<svg class="ic" style="left:2128.4px;top:467.8px;width:20.4px;height:14.6px" viewBox="-2 -2 20.4 14.6"><polyline points="0,0 8.20,10.60 16.40,0" fill="none" stroke="#d0d0d0" stroke-width="1.7" stroke-linecap="square" stroke-linejoin="miter"/></svg>
<span class="cb" style="left:2192px;top:458px"></span>
<span class="t med" style="font-size:25.6px;color:#262626;left:2233.75px;top:461.00px;transform:scaleX(1.0437);">Compare Previous</span>
<div class="btn primary" style="left:2480px;top:444px;width:268px;height:58px"></div>
<span class="t" style="font-size:25.6px;color:#fff;left:2509.56px;top:461.00px;transform:scaleX(1.0425);">Add to dashboard</span>
<svg class="chart" style="left:1141.8px;top:531px;width:1650.2px;height:1021px" viewBox="1141.8 531 1650.2 1021"><line x1="1345.0" y1="1433.9" x2="2739.0" y2="1433.9" stroke="#dadada" stroke-width="1.8"/><line x1="1345.0" y1="1327.9" x2="2739.0" y2="1327.9" stroke="#dadada" stroke-width="1.8"/><line x1="1345.0" y1="1222.9" x2="2739.0" y2="1222.9" stroke="#dadada" stroke-width="1.8"/><line x1="1345.0" y1="1116.9" x2="2739.0" y2="1116.9" stroke="#dadada" stroke-width="1.8"/><line x1="1345.0" y1="1010.9" x2="2739.0" y2="1010.9" stroke="#dadada" stroke-width="1.8"/><line x1="1345.0" y1="904.9" x2="2739.0" y2="904.9" stroke="#dadada" stroke-width="1.8"/><line x1="1345.0" y1="798.9" x2="2739.0" y2="798.9" stroke="#dadada" stroke-width="1.8"/><line x1="1345.0" y1="692.9" x2="2739.0" y2="692.9" stroke="#dadada" stroke-width="1.8"/><line x1="1345.0" y1="586.9" x2="2739.0" y2="586.9" stroke="#dadada" stroke-width="1.8"/><line x1="1363.0" y1="586.9" x2="1363.0" y2="1539.6" stroke="#d4d4d4" stroke-width="1.8"/><line x1="1345.0" y1="1539.9" x2="2739.0" y2="1539.9" stroke="#9a9a9a" stroke-width="1.8"/><line x1="1363.0" y1="1539.6" x2="1363.0" y2="1552" stroke="#9a9a9a" stroke-width="1.8"/><circle cx="1363.0" cy="1539.6" r="5.4" fill="rgba(0,0,0,0.1)" stroke="#4f75d0" stroke-width="1.8"/><circle cx="1500.6" cy="1539.6" r="5.4" fill="rgba(0,0,0,0.1)" stroke="#4f75d0" stroke-width="1.8"/><circle cx="1638.2" cy="1539.6" r="5.4" fill="rgba(0,0,0,0.1)" stroke="#4f75d0" stroke-width="1.8"/><circle cx="1775.8" cy="1539.6" r="5.4" fill="rgba(0,0,0,0.1)" stroke="#4f75d0" stroke-width="1.8"/><circle cx="1913.4" cy="1539.6" r="5.4" fill="rgba(0,0,0,0.1)" stroke="#4f75d0" stroke-width="1.8"/><circle cx="2051.0" cy="1408.0" r="5.4" fill="rgba(0,0,0,0.1)" stroke="#4f75d0" stroke-width="1.8"/><circle cx="2188.6" cy="1106.1" r="5.4" fill="rgba(0,0,0,0.1)" stroke="#4f75d0" stroke-width="1.8"/><circle cx="2326.2" cy="1054.8" r="5.4" fill="rgba(0,0,0,0.1)" stroke="#4f75d0" stroke-width="1.8"/><circle cx="2463.8" cy="798.6" r="5.4" fill="rgba(0,0,0,0.1)" stroke="#4f75d0" stroke-width="1.8"/><circle cx="2601.4" cy="644.6" r="5.4" fill="rgba(0,0,0,0.1)" stroke="#4f75d0" stroke-width="1.8"/><circle cx="2739.0" cy="1345.9" r="5.4" fill="rgba(0,0,0,0.1)" stroke="#4f75d0" stroke-width="1.8"/><polyline fill="none" stroke="#4f75d0" stroke-width="1.9" points="1363.0,1539.6 1500.6,1539.6 1638.2,1539.6 1775.8,1539.6 1913.4,1539.6 2051.0,1408.0 2188.6,1106.1 2326.2,1054.8 2463.8,798.6 2601.4,644.6"/><line x1="2601.4" y1="644.6" x2="2739.0" y2="1345.9" stroke="#4f75d0" stroke-width="1.9" stroke-dasharray="18 18"/><text x="1343.8" y="1546.4" text-anchor="end" class="tick">0</text><text x="1343.8" y="1440.4" text-anchor="end" class="tick">200</text><text x="1343.8" y="1334.4" text-anchor="end" class="tick">400</text><text x="1343.8" y="1229.4" text-anchor="end" class="tick">600</text><text x="1343.8" y="1123.4" text-anchor="end" class="tick">800</text><text x="1343.8" y="1017.4" text-anchor="end" class="tick">1000</text><text x="1343.8" y="911.4" text-anchor="end" class="tick">1200</text><text x="1343.8" y="805.4" text-anchor="end" class="tick">1400</text><text x="1343.8" y="699.4" text-anchor="end" class="tick">1600</text><text x="1343.8" y="593.4" text-anchor="end" class="tick">1800</text></svg>
</section>
<div class="chat"><svg viewBox="0 0 90 90" width="90" height="90"><path d="M35,21.7 H55 C63.3,21.7 67.3,25.7 67.3,34 V46 C67.3,51.5 65.200,55.200 61,57.600 V66.200 L47,59.700 H35 C26.700,59.700 22.700,55.700 22.700,47.400 V34 C22.700,25.700 26.700,21.700 35,21.700 Z" fill="none" stroke="#fff" stroke-width="5.2" stroke-linejoin="round"/></svg></div>
</main>
</body></html>
